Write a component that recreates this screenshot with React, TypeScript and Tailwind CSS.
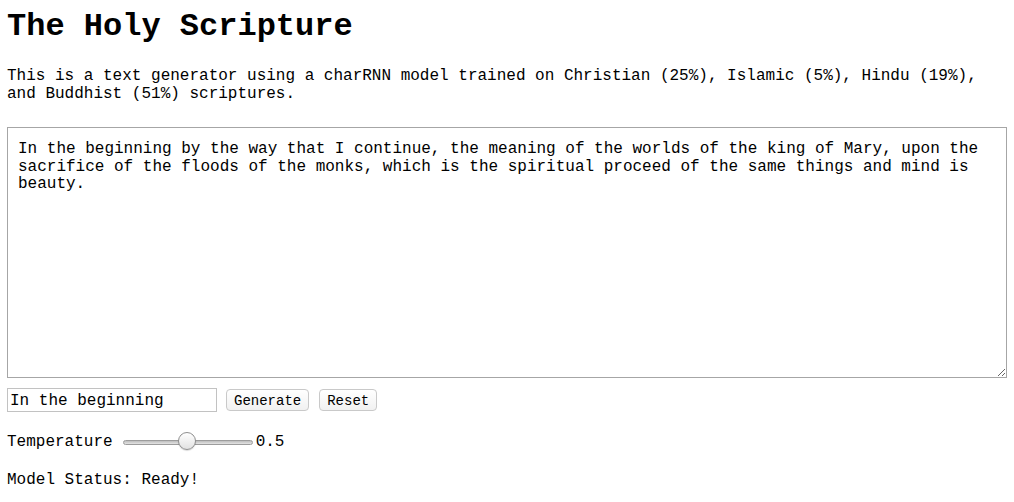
import { useState } from 'react'

const GENERATED =
  'In the beginning by the way that I continue, the meaning of the worlds of the king of Mary, upon the sacrifice of the floods of the monks, which is the spiritual proceed of the same things and mind is beauty.'

export default function App() {
  const [seed, setSeed] = useState('In the beginning')
  const [temp] = useState(0.5)

  return (
    <div className="min-h-screen bg-white text-black font-['Liberation_Mono','Courier_New',monospace] px-[7px]">
      <h1 className="pt-[9px] text-[32px] leading-[36px] font-bold">The Holy Scripture</h1>

      <p className="mt-[22px] text-[16px] leading-[18px]">
        This is a text generator using a charRNN model trained on Christian (25%), Islamic (5%), Hindu (19%), and
        Buddhist (51%) scriptures.
      </p>

      <textarea
        readOnly
        value={GENERATED}
        className="mt-[24px] block w-[1000px] h-[251px] border border-[#a6a6a6] bg-white px-[10px] pt-[13px] text-[16px] leading-[17.5px] font-['Liberation_Mono','Courier_New',monospace] outline-none resize"
      />

      {/* Seed + actions */}
      <div className="mt-[10px] flex items-center">
        <input
          value={seed}
          onChange={e => setSeed(e.target.value)}
          className="w-[210px] h-[24px] border border-[#c2c2c2] px-[2px] pt-[1px] text-[16px] font-['Liberation_Mono','Courier_New',monospace] outline-none"
        />
        <button className="ml-[9px] h-[22px] px-[7px] pt-[2px] rounded-[4px] border border-[#c9c9c9] bg-gradient-to-b from-white to-[#f1f1f1] text-[14px] leading-none font-['Liberation_Mono','Courier_New',monospace]">
          Generate
        </button>
        <button className="ml-[10px] h-[22px] px-[7px] pt-[2px] rounded-[4px] border border-[#c9c9c9] bg-gradient-to-b from-white to-[#f1f1f1] text-[14px] leading-none font-['Liberation_Mono','Courier_New',monospace]">
          Reset
        </button>
      </div>

      {/* Temperature */}
      <div className="mt-[20px] flex items-center h-[20px] text-[16px]">
        <span>Temperature</span>
        <div className="relative ml-[10px] w-[130px] h-[20px] flex items-center">
          <div className="w-full h-[5px] rounded-full border border-[#9c9c9c] bg-gradient-to-b from-[#bdbdbd] to-[#e4e4e4]" />
          <div className="absolute left-[55px] top-[0px] w-[18px] h-[18px] rounded-full border border-[#8f8f8f] bg-gradient-to-b from-white to-[#e2e2e2] shadow-[0_1px_1px_rgba(0,0,0,0.15)]" />
        </div>
        <span className="ml-[3px]">{temp}</span>
      </div>

      <p className="mt-[19px] text-[16px] leading-[18px]">Model Status: Ready!</p>
    </div>
  )
}
